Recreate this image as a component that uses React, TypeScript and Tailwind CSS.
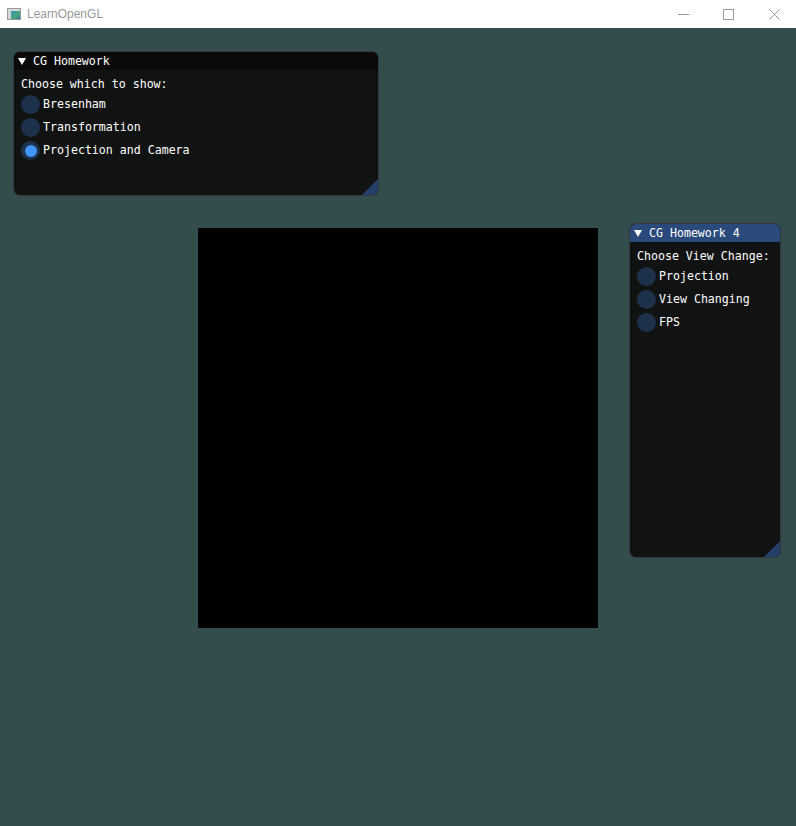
const mono = "font-['DejaVu_Sans_Mono','Liberation_Mono',monospace] text-[11.6px] leading-[13px] text-white";

function Radio({ label, selected }: { label: string; selected?: boolean }) {
  return (
    <div className="flex h-[19px] items-center gap-[3px]">
      <div className="flex h-[19px] w-[19px] items-center justify-center rounded-full bg-[#1e314b]">
        {selected && <div className="h-[12px] w-[12px] rounded-full bg-[#4296fa]" />}
      </div>
      <span className="whitespace-pre">{label}</span>
    </div>
  );
}

function ImWindow({
  title,
  active,
  prompt,
  items,
  selected,
  className
}: {
  title: string;
  active?: boolean;
  prompt: string;
  items: string[];
  selected?: number;
  className: string;
}) {
  return (
    <div
      className={`${className} ${mono} flex flex-col overflow-hidden rounded-[7px] border border-[#6e6e80]/40 bg-[#111313]`}
    >
      <div
        className={`flex h-[18px] shrink-0 items-center ${active ? 'bg-[#294a7a]' : 'bg-[#0a0a0a]'}`}
      >
        <svg width="8" height="7" viewBox="0 0 8 7" className="ml-[4px]">
          <polygon points="0,0 8,0 4,7" fill="#ffffff" />
        </svg>
        <span className="ml-[7px] whitespace-pre">{title}</span>
      </div>
      <div className="flex flex-col gap-[4px] px-[7px] pt-[8px]">
        <div className="whitespace-pre">{prompt}</div>
        {items.map((it, i) => (
          <Radio key={it} label={it} selected={i === selected} />
        ))}
      </div>
      <svg width="16" height="16" viewBox="0 0 16 16" className="absolute bottom-0 right-0">
        <polygon points="16,0 16,16 0,16" fill="#24406a" />
      </svg>
    </div>
  );
}

export default function App() {
  return (
    <div className="flex h-[826px] w-[796px] flex-col overflow-hidden bg-[#334d4d]">
      <div className="flex h-[28px] shrink-0 items-center bg-white">
        <svg width="14" height="12" viewBox="0 0 14 12" className="ml-[7px]">
          <defs>
            <linearGradient id="g" x1="0" y1="0" x2="1" y2="1">
              <stop offset="0" stopColor="#3a8fc0" />
              <stop offset="0.6" stopColor="#48a877" />
              <stop offset="1" stopColor="#2f6fb0" />
            </linearGradient>
          </defs>
          <rect x="0.5" y="0.5" width="13" height="11" fill="#ffffff" stroke="#9a9a9a" />
          <rect x="1" y="1" width="12" height="2" fill="#d8d8d8" />
          <rect x="1" y="3" width="3" height="8" fill="#cfd6dc" />
          <rect x="4" y="3" width="9" height="8" fill="url(#g)" />
        </svg>
        <span className="ml-[6px] font-['Liberation_Sans',Arial,sans-serif] text-[12px] text-[#999999]">
          LearnOpenGL
        </span>
        <svg width="11" height="11" viewBox="0 0 11 11" className="ml-auto">
          <line x1="0" y1="5.5" x2="11" y2="5.5" stroke="#999999" strokeWidth="1" />
        </svg>
        <svg width="11" height="11" viewBox="0 0 11 11" className="ml-[34px]">
          <rect x="0.5" y="0.5" width="10" height="10" fill="none" stroke="#999999" strokeWidth="1" />
        </svg>
        <svg width="11" height="11" viewBox="0 0 11 11" className="ml-[35px] mr-[16px]">
          <line x1="0.5" y1="0.5" x2="10.5" y2="10.5" stroke="#999999" strokeWidth="1" />
          <line x1="10.5" y1="0.5" x2="0.5" y2="10.5" stroke="#999999" strokeWidth="1" />
        </svg>
      </div>
      <div className="relative flex-1">
        <ImWindow
          className="absolute left-[13px] top-[23px] h-[145px] w-[366px]"
          title="CG Homework"
          prompt="Choose which to show:"
          items={['Bresenham', 'Transformation', 'Projection and Camera']}
          selected={2}
        />
        <div className="absolute left-[198px] top-[200px] h-[400px] w-[400px] bg-black" />
        <ImWindow
          className="absolute left-[629px] top-[195px] h-[335px] w-[152px]"
          title="CG Homework 4"
          active
          prompt="Choose View Change:"
          items={['Projection', 'View Changing', 'FPS']}
        />
      </div>
    </div>
  );
}
